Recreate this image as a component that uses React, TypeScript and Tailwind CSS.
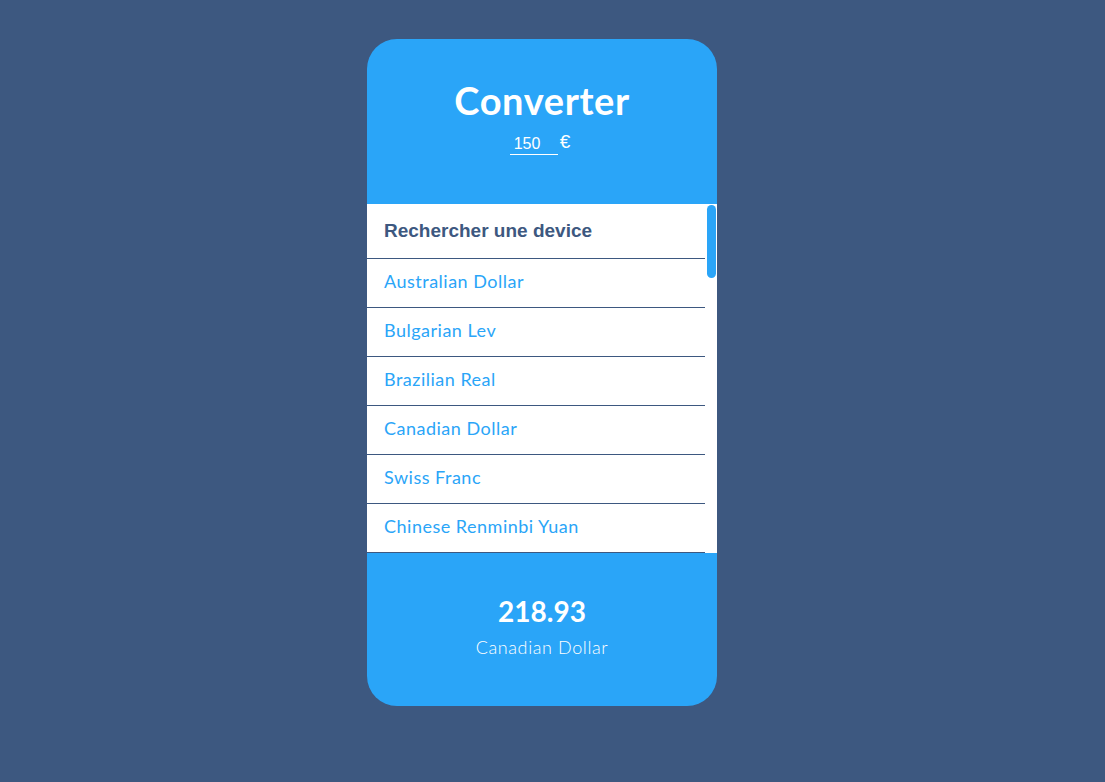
import { useState } from "react";

const currencies = [
  "Australian Dollar",
  "Bulgarian Lev",
  "Brazilian Real",
  "Canadian Dollar",
  "Swiss Franc",
  "Chinese Renminbi Yuan",
  "Czech Koruna",
  "Danish Krone",
  "British Pound",
  "Hong Kong Dollar",
  "Croatian Kuna",
  "Hungarian Forint",
  "Indonesian Rupiah",
  "Israeli New Sheqel",
  "Indian Rupee",
];

export default function App() {
  const [amount, setAmount] = useState("150");
  const [selected] = useState("Canadian Dollar");

  return (
    <div className="min-h-screen w-full bg-[#3d5880] flex justify-center pt-[39px] pr-[21px] font-['Lato',sans-serif]">
      <div className="w-[350px] h-[667px] rounded-[30px] bg-[#2aa5f8] flex flex-col overflow-hidden">
        <div className="h-[165px] flex flex-col items-center pt-[38px] text-white">
          <h1 className="text-[38px] font-bold leading-[46px] tracking-[0.6px]">Converter</h1>
          <div className="flex items-end mt-[8px] ml-[-4px] font-['Liberation_Sans',sans-serif]">
            <input
              value={amount}
              onChange={(e) => setAmount(e.target.value)}
              className="w-[48px] bg-transparent border-b border-white text-white text-[16px] leading-[20px] pl-[4px] outline-none"
            />
            <span className="text-[19px] leading-[22px] ml-[2px] mb-[2px] font-light">€</span>
          </div>
        </div>

        <div className="h-[349px] bg-white flex">
          <div className="w-[338px] overflow-y-scroll [scrollbar-width:none]">
            <div className="h-[55px] border-b border-[#3d5880] flex items-center px-[17px]">
              <input
                placeholder="Rechercher une device"
                className="w-full font-['Liberation_Sans',sans-serif] font-bold text-[19px] text-[#3d5880] placeholder:text-[#3d5880] outline-none"
              />
            </div>
            {currencies.map((c) => (
              <div
                key={c}
                className="h-[49px] border-b border-[#3d5880] flex items-center px-[17px] pb-[3px] text-[18px] text-[#2aa5f8] tracking-[0.5px] cursor-pointer"
              >
                {c}
              </div>
            ))}
          </div>
          <div className="w-[12px] flex justify-center pt-[1px]">
            <div className="w-[9px] h-[73px] rounded-full bg-[#2aa5f8]" />
          </div>
        </div>

        <div className="flex-1 flex flex-col items-center pt-[41px] text-white">
          <div className="text-[28px] font-bold leading-[34px]">218.93</div>
          <div className="text-[18px] leading-[24px] mt-[7px] font-light tracking-[0.6px]">{selected}</div>
        </div>
      </div>
    </div>
  );
}
